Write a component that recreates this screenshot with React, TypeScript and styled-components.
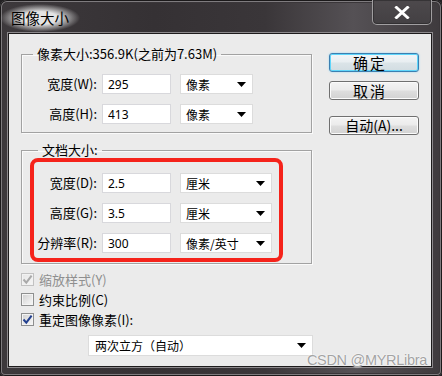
import React from "react";
import styled, { createGlobalStyle, css } from "styled-components";

const Global = createGlobalStyle`
  html, body { margin: 0; padding: 0; background: #232123; }
  body { width: 442px; height: 376px; overflow: hidden; font-family: "Noto Sans CJK SC", "Noto Sans", sans-serif; }
  * { box-sizing: border-box; }
`;

const Window = styled.div`
  position: relative;
  width: 442px;
  height: 376px;
  border-radius: 7px 7px 5px 5px;
  background: linear-gradient(90deg, #3d393c 0%, #353134 35%, #3a3639 60%, #555155 80%, #3e3a3d 100%);
  box-shadow: inset 0 0 0 1px #1b191a, inset 0 0 0 2px #7e7b7e, inset 0 0 0 3px #3a3639;
  display: flex;
  flex-direction: column;
  padding: 0 10px 9px 8px;
`;

const TitleBar = styled.div`
  height: 33px;
  display: flex;
  align-items: flex-start;
  justify-content: space-between;
`;

const Title = styled.div`
  margin: 4px 0 0 -8px;
  padding: 5px 11px 6px 11px;
  font-size: 14.5px;
  line-height: 17px;
  color: #000;
  background: radial-gradient(ellipse closest-side, rgba(236, 236, 236, 0.95) 45%, rgba(236, 236, 236, 0.35) 80%, rgba(236, 236, 236, 0) 100%);
`;

const CloseButton = styled.div`
  width: 60px;
  height: 26px;
  margin-top: -1px;
  border: 1px solid rgba(190, 188, 190, 0.75);
  border-radius: 0 0 5px 5px;
  background: linear-gradient(180deg, #4d494c 0%, #434043 100%);
  box-shadow: inset 0 0 0 1px rgba(40, 38, 40, 0.6);
  display: flex;
  align-items: center;
  justify-content: center;
  padding-top: 1px;
`;

const Client = styled.div`
  position: relative;
  flex: 1;
  background: #ebebeb;
  border: 1px solid #1d1b1c;
  box-shadow: 0 0 0 1px #8c898c;
  display: grid;
  grid-template-columns: 303px 1fr;
`;

const LeftCol = styled.div`
  padding: 12px 0 0 12px;
  display: flex;
  flex-direction: column;
`;

const RightCol = styled.div`
  padding: 19px 0 0 17px;
  display: flex;
  flex-direction: column;
`;

const Group = styled.fieldset<{ $mt?: number }>`
  margin: ${(p) => p.$mt ?? 0}px 0 0 0;
  padding: 0;
  width: 291px;
  border: 1px solid #a2a2a2;
  box-shadow: inset 1px 1px 0 #fafafa, 1px 1px 0 #fafafa;
  min-width: 0;
`;

const Legend = styled.legend<{ $ml: number }>`
  margin-left: ${(p) => p.$ml}px;
  padding: 0 4px;
  font-size: 13px;
  line-height: 16px;
  color: #000;
`;

const Rows = styled.div<{ $pt: number; $pb: number }>`
  display: flex;
  flex-direction: column;
  gap: 10px;
  padding: ${(p) => p.$pt}px 0 ${(p) => p.$pb}px 0;
`;

const Highlight = styled.div`
  margin: 0 0 1px 8px;
  width: 253px;
  border: 4px solid #f5231b;
  border-radius: 8px;
`;

const Row = styled.div`
  display: flex;
  align-items: center;
  height: 20px;
`;

const Label = styled.span<{ $w: number }>`
  width: ${(p) => p.$w}px;
  margin-right: 5px;
  text-align: right;
  font-size: 13px;
  line-height: 20px;
  color: #000;
  white-space: nowrap;
`;

const TextInput = styled.input`
  width: 69px;
  height: 20px;
  margin: 0 9px 0 0;
  padding: 0 0 0 5px;
  border: 1px solid #d8d8dc;
  background: #fff;
  font-family: "Noto Sans", "Noto Sans CJK SC", sans-serif;
  font-size: 12px;
  color: #000;
  outline: none;
`;

const Select = styled.div<{ $w: number; $h?: number }>`
  width: ${(p) => p.$w}px;
  height: ${(p) => p.$h ?? 20}px;
  display: flex;
  align-items: center;
  justify-content: space-between;
  padding: 0 6px 0 5px;
  border: 1px solid #dcdcdc;
  background: #fff;
  font-size: 12px;
  color: #000;
  white-space: nowrap;
`;

const BottomSelect = styled(Select)`
  margin: 6px 0 0 67px;
  padding-left: 6px;
`;

const Checks = styled.div`
  margin-top: 5px;
  display: flex;
  flex-direction: column;
`;

const CheckRow = styled.div<{ $disabled?: boolean }>`
  display: flex;
  align-items: center;
  height: 20px;
  font-size: 13px;
  color: ${(p) => (p.$disabled ? "#8f8f8f" : "#000")};
`;

const Box = styled.span<{ $disabled?: boolean }>`
  width: 13px;
  height: 13px;
  margin-right: 5px;
  border: 1px solid ${(p) => (p.$disabled ? "#c2c2c2" : "#8e8f8f")};
  background: ${(p) =>
    p.$disabled
      ? "linear-gradient(135deg, #e6e6e6 0%, #f6f6f6 100%)"
      : "linear-gradient(135deg, #cfcfcf 0%, #e9e9e9 60%, #f7f7f7 100%)"};
  box-shadow: inset 0 0 0 1px ${(p) => (p.$disabled ? "#f2f2f2" : "#f4f4f4")};
  display: flex;
  align-items: center;
  justify-content: center;
`;

const Button = styled.div<{ $default?: boolean; $mt?: number; $spaced?: boolean }>`
  width: 90px;
  height: 19px;
  margin-top: ${(p) => p.$mt ?? 0}px;
  border: 1px solid #707070;
  border-radius: 3px;
  background: linear-gradient(180deg, #f4f4f4 0%, #ebebeb 48%, #dedede 52%, #d2d2d2 100%);
  box-shadow: inset 0 0 0 1px #fbfbfb;
  display: flex;
  align-items: center;
  justify-content: center;
  font-size: 14px;
  line-height: 17px;
  color: #000;
  white-space: nowrap;
  ${(p) =>
    p.$spaced &&
    css`
      font-size: 15px;
      letter-spacing: 2px;
      padding-right: 8px;
    `}
  ${(p) =>
    p.$default &&
    css`
      border-color: #3c7fb1;
      box-shadow: inset 0 0 0 1px #5fd6fb, 0 0 2px #8fd8f6;
      background: linear-gradient(180deg, #f2f6f8 0%, #e8eef1 48%, #dbe4e8 52%, #d2dde2 100%);
    `}
`;

const Watermark = styled.div`
  position: absolute;
  right: 15px;
  bottom: 9px;
  font-family: "Liberation Sans", Arial, sans-serif;
  font-size: 14.5px;
  line-height: 14px;
  color: #a3a3a3;
  text-shadow: 0 0 1px #fff, 0 0 2px #fff;
  letter-spacing: -0.3px;
`;

const Arrow = () => (
  <svg width="9" height="5" viewBox="0 0 9 5">
    <polygon points="0,0 9,0 4.5,5" fill="#000" />
  </svg>
);

const Check = ({ color }: { color: string }) => (
  <svg width="11" height="11" viewBox="0 0 11 11">
    <path d="M1.5 5.5 L4.3 8.6 L9.6 1.6" fill="none" stroke={color} strokeWidth="2" strokeLinejoin="miter" />
  </svg>
);

type RowData = { label: string; value: string; unit: string };

const topRows: RowData[] = [
  { label: "宽度(W):", value: "295", unit: "像素" },
  { label: "高度(H):", value: "413", unit: "像素" },
];

const docRows: RowData[] = [
  { label: "宽度(D):", value: "2.5", unit: "厘米" },
  { label: "高度(G):", value: "3.5", unit: "厘米" },
  { label: "分辨率(R):", value: "300", unit: "像素/英寸" },
];

const FieldRow = ({ row, labelW, selectW }: { row: RowData; labelW: number; selectW: number }) => (
  <Row>
    <Label $w={labelW}>{row.label}</Label>
    <TextInput readOnly value={row.value} />
    <Select $w={selectW}>
      <span>{row.unit}</span>
      <Arrow />
    </Select>
  </Row>
);

export default function App() {
  return (
    <>
      <Global />
      <Window>
        <TitleBar>
          <Title>图像大小</Title>
          <CloseButton>
            <svg width="16" height="13" viewBox="0 0 16 13">
              <path d="M2.5 1.5 L13.5 11.5 M13.5 1.5 L2.5 11.5" stroke="#fff" strokeWidth="3" strokeLinecap="square" />
            </svg>
          </CloseButton>
        </TitleBar>
        <Client>
          <LeftCol>
            <Group>
              <Legend $ml={11}>像素大小:356.9K(之前为7.63M)</Legend>
              <Rows $pt={12} $pb={8}>
                {topRows.map((r) => (
                  <FieldRow key={r.label} row={r} labelW={75} selectW={73} />
                ))}
              </Rows>
            </Group>
            <Group $mt={9}>
              <Legend $ml={16}>文档大小:</Legend>
              <Highlight>
                <Rows $pt={11} $pb={5}>
                  {docRows.map((r) => (
                    <FieldRow key={r.label} row={r} labelW={63} selectW={92} />
                  ))}
                </Rows>
              </Highlight>
            </Group>
            <Checks>
              <CheckRow $disabled>
                <Box $disabled>
                  <Check color="#a9a9a9" />
                </Box>
                缩放样式(Y)
              </CheckRow>
              <CheckRow>
                <Box />
                约束比例(C)
              </CheckRow>
              <CheckRow>
                <Box>
                  <Check color="#23408f" />
                </Box>
                重定图像像素(I):
              </CheckRow>
            </Checks>
            <BottomSelect $w={225} $h={21}>
              <span>两次立方（自动）</span>
              <Arrow />
            </BottomSelect>
          </LeftCol>
          <RightCol>
            <Button $default $spaced>确定</Button>
            <Button $mt={9} $spaced>取消</Button>
            <Button $mt={16}>自动(A)...</Button>
          </RightCol>
        </Client>
        <Watermark>CSDN @MYRLibra</Watermark>
      </Window>
    </>
  );
}
